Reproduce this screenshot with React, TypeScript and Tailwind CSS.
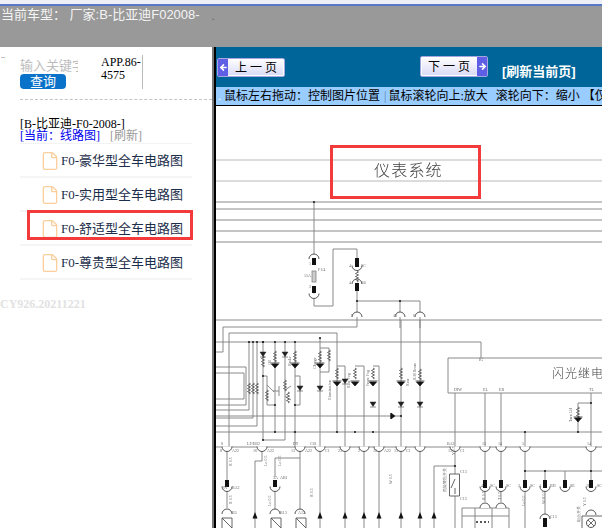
import { ArrowLeft, ArrowRight, File } from "lucide-react";

const items = ["F0-豪华型全车电路图", "F0-实用型全车电路图", "F0-舒适型全车电路图", "F0-尊贵型全车电路图"];

const serif = "font-['Liberation_Serif','Noto_Sans_CJK_SC',serif]";

// wiring of the scan, in page coordinates
const wires = [
  "M216 202H602", "M216 209H602", "M216 220H602", "M216 231H602", "M216 242H602",
  "M314 202V258", "M314 293V306H333V249H357V258", "M357 291V320", "M357 301H420V320", "M400 301V328", "M420 320V328",
  "M216 320H602", "M357 320V327H223V352H216", "M229 370V333H337V432",
  "M216 342H481V358", "M448 358H602M448 358V393H602",
  "M216 416H401", "M216 432H602", "M216 447H602",
  "M216 367H246V405H216", "M216 373H244V399H216",
  "M216 410H249V342", "M216 418H253V342", "M216 426H257V342", "M229 370V447",
  "M263 342V440H285V342", "M275 342V432", "M295 342V447", "M295 376H300V405H295",
  "M263 376H267V405H275", "M285 390L291 386M285 396L291 400", "M267 385L274 392M279 386V396M279 391L273 391",
  "M320 338V447", "M320 348H329V372H320",
  "M337 366H345V447", "M355 366H364V447", "M373 366H379V447", "M401 320V528", "M420 320V528",
  "M455 393V528", "M485 393V480", "M501 393V480", "M525 432V528", "M591 393V480", "M591 403H578V432", "M525 471H602",
  "M545 471V480", "M565 471V480", "M545 489V517",
  "M227 447V480", "M227 490V508", "M262 447V461H255V528", "M300 447V510", "M275 458H300", "M275 458V477", "M275 490V510",
  "M320 447V528", "M345 447V528", "M364 447V528", "M379 447V528", "M434 528V466H455",
  "M485 489V502", "M501 489V502", "M462 528V508H509V528", "M462 516H509M475 508V528M492 508V528",
];

const dots = [[249, 342], [253, 342], [257, 342], [263, 342], [275, 342], [285, 342], [295, 342], [314, 202], [357, 301], [400, 301], [525, 432], [591, 403], [578, 432], [525, 471], [545, 471], [591, 471], [263, 376], [275, 405], [295, 405], [275, 432], [295, 432], [337, 432], [355, 432], [373, 432], [320, 338], [263, 342], [401, 416], [455, 466], [263, 440]];

const pins = [[314, 258, 7], [314, 286, 7], [357, 258, 9], [357, 283, 8], [227, 480, 7], [275, 480, 7], [485, 480, 8], [501, 480, 8], [525, 480, 8], [545, 480, 8], [565, 480, 8], [591, 480, 8], [545, 518, 9]];

// connector cups, open end up
const cups = [[314, 296], [357, 268]].concat(
  [227, 262, 300, 320, 345, 364, 379, 401, 420, 455, 485, 501, 525, 591].map((x) => [x, 449]),
  [[227, 489], [275, 489], [485, 489], [501, 489], [525, 489], [545, 489], [565, 489], [591, 489]],
);

// same cups, open end down
const caps = [[314, 258], [357, 283], [357, 316], [400, 316], [420, 316], [485, 507], [501, 507], [591, 514], [227, 513], [275, 513], [300, 513], [545, 518]];

const leds = [[275, 363], [295, 363], [320, 363], [337, 381], [355, 381], [373, 381], [401, 381], [420, 381], [578, 417]];

// plain diodes, smaller than the lamps beside them
const diodes = [[263, 352], [285, 352], [300, 386], [320, 386], [345, 379], [373, 402], [401, 402], [420, 402]];

const coils = [[263, 356], [275, 351], [295, 351], [285, 380], [320, 351], [329, 350], [337, 368], [355, 368], [373, 368], [401, 368], [420, 369], [578, 407], [267, 390], [288, 392], [249, 383], [253, 383], [257, 383], [357, 271]];

const arrows = [255, 320, 345, 364, 379, 401, 420, 434];

const labels: [number, number, string][] = [
  [309, 265, "1"], [318, 271, "F1/4"], [304, 277, "15A"], [309, 288, "2"], [349, 267, "4"], [361, 267, "SC"], [349, 284, "4"], [361, 284, "B0"],
  [351, 317, "9"], [393, 317, "13"], [413, 317, "6"], [221, 445, "8"], [247, 445, "LF/EB2"], [293, 445, "D9"], [310, 445, "C01"], [220, 452, "8"], [232, 452, "A22"], [253, 452, "16"], [267, 452, "A22"], [291, 452, "13"], [305, 452, "A22"], [325, 452, "C1"], [338, 452, "23"], [358, 452, "2"], [373, 452, "12"], [384, 452, "A22"], [394, 452, "13"], [406, 452, "C1"], [447, 445, "BA2"], [448, 452, "13"], [460, 452, "C1"], [482, 445, "13"], [498, 445, "14"], [522, 445, "5"], [587, 445, "14"],
  [454, 391, "DIW"], [483, 391, "EL"], [499, 391, "ER"], [589, 391, "TL"], [479, 361, "IG"],
  [273, 479, "3A"], [280, 479, "AB1"], [222, 489, "2N"], [232, 489, "BA2"], [481, 487, "4"], [490, 487, "SC"], [506, 487, "SC"], [518, 487, "2"], [530, 487, "SC"], [539, 487, "4"], [550, 487, "BH"], [570, 487, "SE"], [586, 487, "11"], [597, 487, "SC"], [460, 473, "C13"], [460, 500, "C13"], [298, 514, "A12"], [232, 514, "B5"], [280, 514, "B13"], [550, 518, "C13"],
];

const vertical: [number, number, string][] = [
  [316, 369, "Charge"], [291, 366, "Brake"], [271, 365, "Oil"], [331, 400, "Illumination"], [350, 388, "Rear Fog"], [369, 386, "Front Fog"], [409, 386, "Rear"], [416, 380, "R/H Beam"], [572, 422, "Turn LH"],
  [232, 466, "R 0.5"], [267, 466, "Lo 0.5"], [281, 466, "Lo 0.5"], [313, 497, "R 0.5"], [232, 504, "R 0.5"], [271, 506, "Lo 0.5"], [455, 455, "Y 0.5"], [485, 500, "R 0.5"], [501, 500, "T 0.5"], [525, 506, "Lo 0.5"], [545, 504, "W/R 0.5"], [586, 506, "Y 0.5"], [392, 484, "W 0.5"], [446, 492, "危险警告开关"], [580, 522, "组合开关"],
];

function Diagram() {
  return (
    <svg viewBox="216 106 386 422" className="block w-[386px] h-[422px]">
      <g className="blur-[0.45px]">
        <path d="M216 160H602M216 181H602" stroke="#b9b9b9" strokeWidth="1.2" />
        <g fill="none" stroke="#7e7e7e" strokeWidth="0.9">
          {wires.map((d, i) => (
            <path key={i} d={d} />
          ))}
        </g>
        <g fill="#fff" stroke="#444" strokeWidth="0.9">
          {cups.map(([x, y], i) => (
            <path key={i} d={`M${x - 5} ${y - 2.5}A5 5 0 0 0 ${x + 5} ${y - 2.5}`} />
          ))}
          {caps.map(([x, y], i) => (
            <path key={i} d={`M${x - 5} ${y + 1}A5 5 0 0 1 ${x + 5} ${y + 1}`} />
          ))}
        </g>
        <g fill="#fff" stroke="#444" strokeWidth="0.8">
          {coils.map(([x, y], i) => (
            <path key={i} d={`M${x} ${y}l1.5 1l-3 1.5l3 1.5l-3 1.5l3 1.5l-3 1.5l3 1.5l-1.5 1`} />
          ))}
        </g>
        {pins.map(([x, y, h], i) => (
          <rect key={i} x={x - 2} y={y} width="4" height={h} fill="#111" />
        ))}
        {leds.map(([x, y], i) => (
          <path key={i} d={`M${x - 3.5} ${y + 1}l3.5 4l3.5 -4zM${x - 4.5} ${y}h9`} fill="#111" stroke="#111" strokeWidth="0.7" />
        ))}
        {diodes.map(([x, y], i) => (
          <path key={i} d={`M${x - 3} ${y}h6l-3 4.5zM${x - 3} ${y + 5}h6`} fill="#222" stroke="#222" strokeWidth="0.5" />
        ))}
        <path d="M395 416l-4 -3v6zM390.5 413v6" fill="#111" stroke="#111" strokeWidth="0.6" />
        {arrows.map((x) => (
          <path key={x} d={`M${x} 512l-2.5 6.5h5z`} fill="#111" />
        ))}
        {dots.map(([x, y], i) => (
          <circle key={i} cx={x} cy={y} r="1.1" fill="#222" />
        ))}
        <rect x="312" y="271" width="4" height="11" fill="#ccc" stroke="#777" strokeWidth="0.7" />
        <path d="M449.5 474H459.5V496H449.5ZM455 479L451 488M455 488V494" fill="#fff" stroke="#555" strokeWidth="0.9" />
        <path d="M222 528V518H232V528M222 518L232 528M271 528V518H281V528M271 518L281 528M296 528V518H306V528M296 518L306 528" fill="none" stroke="#555" strokeWidth="0.9" />
        <path d="M582 528V516H602" fill="none" stroke="#555" strokeWidth="0.9" />
        <circle cx="591" cy="523" r="4.5" fill="#fff" stroke="#444" strokeWidth="0.9" />
        <path d="M588 520L594 526M594 520L588 526" stroke="#444" strokeWidth="0.8" />
        <path d="M476 522H489" stroke="#222" strokeWidth="1.6" strokeDasharray="2 2" />
        <g fill="#666" fontSize="4" fontFamily="Liberation Serif, serif">
          {labels.map(([x, y, t], i) => (
            <text key={i} x={x} y={y}>{t}</text>
          ))}
          {vertical.map(([x, y, t], i) => (
            <text key={i} x={x} y={y} transform={`rotate(-90 ${x} ${y})`}>{t}</text>
          ))}
        </g>
        <text x="374" y="176" fill="#444" fontSize="16" letterSpacing="1.2" fontFamily="Noto Sans CJK SC, sans-serif" fontWeight="300">仪表系统</text>
        <text x="552" y="378" fill="#444" fontSize="12" letterSpacing="1" fontFamily="Noto Sans CJK SC, sans-serif" fontWeight="300">闪光继电器</text>
      </g>
      <rect x="331.5" y="146.5" width="148" height="51" fill="none" stroke="#f33b3b" strokeWidth="3" />
    </svg>
  );
}

function PageButton({ label, dir }: { label: string; dir: "prev" | "next" }) {
  const arrow = (
    <span className="w-[10px] self-stretch flex items-center justify-center bg-[#5f5fe6] text-white">
      {dir === "prev" ? <ArrowLeft size={9} strokeWidth={4} /> : <ArrowRight size={9} strokeWidth={4} />}
    </span>
  );
  return (
    <div className="flex w-[68px] h-full border border-[#a5a5e0] rounded-[2px] bg-gradient-to-b from-[#ffffff] to-[#d9d9f5] text-[12px] leading-none text-black shadow-[inset_0_0_0_1px_#fff]">
      {dir === "prev" && arrow}
      <span className="flex-1 flex items-center justify-center whitespace-pre">{label}</span>
      {dir === "next" && arrow}
    </div>
  );
}

export default function App() {
  return (
    <div className={`w-[602px] h-[528px] overflow-hidden bg-white flex flex-col ${serif}`}>
      <div className="h-[47px] shrink-0 bg-[#999999] flex flex-col">
        <div className="h-[4px] bg-[#eef0f8]" />
        <div className="h-[2px] bg-[#5a78c8]" />
        <div className="flex pl-[1px] text-[13px] leading-[18px] text-[#f4f4f4] whitespace-pre font-['Liberation_Sans','Noto_Sans_CJK_SC',sans-serif]">
          当前车型： 厂家:B-比亚迪F02008-
          <span className="ml-[12px] text-[#555] text-[10px] leading-[22px]">.</span>
        </div>
      </div>
      <div className="flex flex-1 min-h-0">
        <aside className="relative w-[212px] shrink-0 pl-[20px] pt-[8px]">
          <div className="absolute left-[1px] top-[5px] text-[8px] leading-[8px] text-[#333]">..</div>
          <div className="flex h-[34px]">
            <div className="w-[81px] pt-[3px]">
              <div className="w-[58px] h-[16px] overflow-hidden whitespace-nowrap text-[13px] leading-[16px] text-[#bdbdbd]">输入关键字</div>
              <div className="w-[46px] h-[15px] rounded-[4px] bg-[#0a72c8] text-white text-[13px] leading-[15px] text-center">查询</div>
            </div>
            <div className="w-[42px] border-r border-[#bbb] text-[12px] leading-[13px] text-black break-all pt-[1px]">APP.86-4575</div>
          </div>
          <div className="mt-[10px] border-t border-dashed border-[#c4c4c4]" />
          <div className="mt-[18px] text-[12px] leading-[12px] text-black">[B-比亚迪-F0-2008-]</div>
          <div className="text-[12px] leading-[12px] whitespace-pre">
            <span className="text-[#0000ee]">[当前：线路图]</span>
            <span className="text-[#999] ml-[10px]">[刷新]</span>
          </div>
          <ul className="w-[172px] mt-[1px] border-t border-[#f3f3f3]">
            {items.map((t) => (
              <li key={t} className="h-[34px] flex items-center pl-[20px] pt-[1px] border-b-2 border-[#f5f5f5] text-[13px] text-[#1c2e4a] whitespace-nowrap">
                <File size={20} strokeWidth={1.6} className="text-[#fbcf9d] shrink-0 mr-[1px]" />
                {t}
              </li>
            ))}
          </ul>
          <div className="mt-[17px] -ml-[20px] text-[12px] leading-[14px] font-bold text-[#e2e2e2]">CY926.20211221</div>
          <div className="absolute left-[27px] top-[163px] w-[166px] h-[30px] border-[3px] border-[#f33b3b]" />
        </aside>
        <div className="w-[2px] bg-[#777]" />
        <div className="w-[2px] bg-black" />
        <main className="flex-1 min-w-0 flex flex-col">
          <div className="h-[40px] bg-[#006699] flex pl-[1px]">
            <div className="mt-[11px] mb-[10px]">
              <PageButton label="上 一 页" dir="prev" />
            </div>
            <div className="mt-[9px] mb-[10px] ml-[135px]">
              <PageButton label="下 一 页" dir="next" />
            </div>
            <div className="mt-[17px] ml-[14px] text-[13px] leading-[16px] font-bold text-white font-['Liberation_Sans','Noto_Sans_CJK_SC',sans-serif] whitespace-nowrap">[刷新当前页]</div>
          </div>
          <div className="h-[19px] bg-[#99ccff] border-b border-black pl-[2px] text-[12px] leading-[18px] text-black whitespace-pre overflow-hidden">
            <span className="text-white">.</span>
            <span className="ml-[3px]">鼠标左右拖动：控制图片位置</span>
            <span className="ml-[4px] text-[#5b7fa8]">|</span>
            <span className="ml-[2px]">鼠标滚轮向上:放大</span>
            <span className="ml-[8px]">滚轮向下：缩小 【仅</span>
          </div>
          <Diagram />
        </main>
      </div>
    </div>
  );
}
